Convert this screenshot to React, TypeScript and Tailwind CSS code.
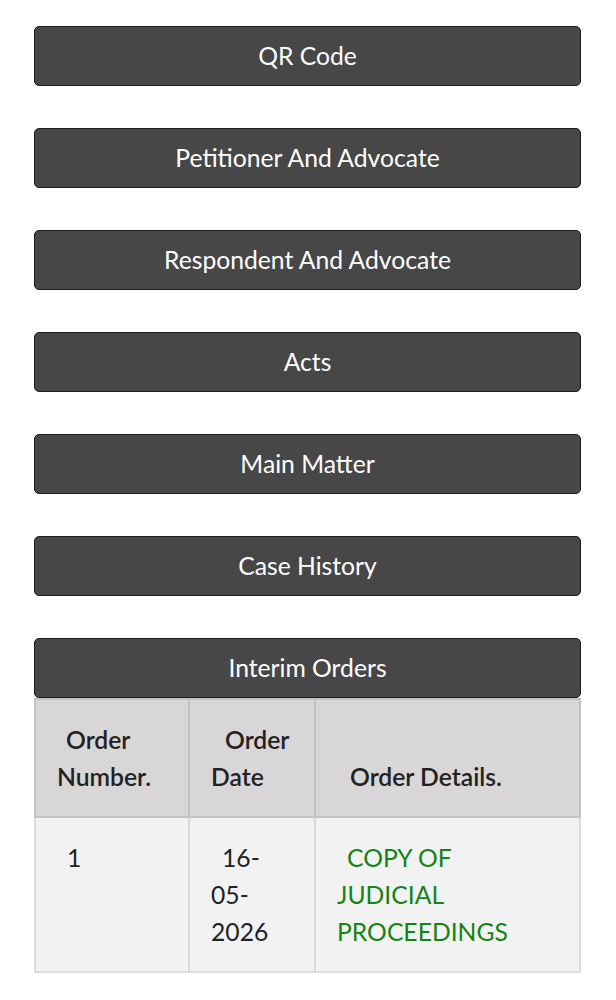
const SECTIONS = [
  'QR Code',
  'Petitioner And Advocate',
  'Respondent And Advocate',
  'Acts',
  'Main Matter',
  'Case History',
]

function SectionButton({ label }: { label: string }) {
  return (
    <button
      type="button"
      className="w-full h-[60px] rounded-[5px] border-[1.5px] border-[#1c1c1c] bg-[#474747] text-white text-[24.7px] leading-none"
    >
      {label}
    </button>
  )
}

export default function App() {
  return (
    <div className="min-h-screen bg-white font-['Lato','Liberation_Sans',sans-serif]">
      <div className="px-[34px] pt-[26px] flex flex-col gap-[42px] w-[615px]">
        {SECTIONS.map((s) => (
          <SectionButton key={s} label={s} />
        ))}

        <div>
          <SectionButton label="Interim Orders" />
          <table className="w-full border-collapse text-[24.7px] leading-[37px] text-[#222]">
            <colgroup>
              <col className="w-[154px]" />
              <col className="w-[126px]" />
              <col />
            </colgroup>
            <thead>
              <tr className="bg-[#d9d6d7]">
                <th className="border-2 border-[#c3c1c2] p-[21px] text-left align-bottom font-semibold">
                  <span className="inline-block indent-[9px]">Order Number.</span>
                </th>
                <th className="border-2 border-[#c3c1c2] p-[21px] text-left align-bottom font-semibold">
                  <span className="inline-block indent-[14px]">Order Date</span>
                </th>
                <th className="border-2 border-[#c3c1c2] p-[21px] text-left align-bottom font-semibold">
                  <span className="inline-block indent-[13px]">Order Details.</span>
                </th>
              </tr>
            </thead>
            <tbody>
              <tr className="bg-[#f3f2f3]">
                <td className="border-2 border-[#dcdadb] p-[21px] align-top">
                  <span className="inline-block indent-[10px]">1</span>
                </td>
                <td className="border-2 border-[#dcdadb] p-[21px] align-top">
                  <span className="inline-block indent-[11px]">16-05-2026</span>
                </td>
                <td className="border-2 border-[#dcdadb] p-[21px] align-top text-[#168316]">
                  <span className="inline-block indent-[10px] pr-[40px]">COPY OF JUDICIAL PROCEEDINGS</span>
                </td>
              </tr>
            </tbody>
          </table>
        </div>
      </div>
    </div>
  )
}
